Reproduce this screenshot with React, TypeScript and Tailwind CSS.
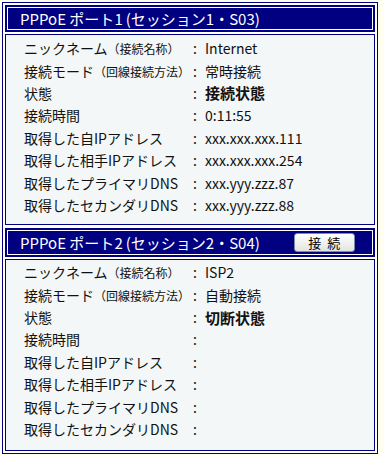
import React from "react";

const FONT = { fontFamily: '"Noto Sans CJK JP", "Noto Sans", sans-serif' };

type Row = { label: React.ReactNode; value: React.ReactNode };

function Label({ main, sub }: { main: string; sub?: string }) {
  return (
    <span>
      {main}
      {sub && <span className="text-[12px]">{sub}</span>}
    </span>
  );
}

function Body({ rows, className }: { rows: Row[]; className: string }) {
  return (
    <div className={`border border-[#000080] bg-[#f4f7f7] ${className}`}>
      {rows.map((r, i) => (
        <div key={i} className="flex h-[22.4px] items-center text-[14px] leading-none text-[#111]">
          <div className="w-[187px] pl-[18px] whitespace-nowrap">{r.label}</div>
          <div className="w-[12px]">:</div>
          <div className="whitespace-nowrap">{r.value}</div>
        </div>
      ))}
    </div>
  );
}

function Header({ port, session, button }: { port: string; session: string; button?: boolean }) {
  return (
    <div className="bg-[#000080] p-[2px]">
      <div className={`flex items-center border border-white pl-[12px] ${button ? "h-[25px]" : "h-[23px]"}`}>
        <span className="text-[15px] leading-none text-white whitespace-nowrap">
          PPPoE ポート{port}
          <span className="ml-[3px]">(</span>セッション{session}・S0{port === "1" ? "3" : "4"})
        </span>
        {button && (
          <button className="ml-[34px] flex h-[19px] w-[61px] items-center justify-center rounded-[3px] border border-[#7a8ca8] bg-gradient-to-b from-white to-[#e4e4e0] text-[13px] leading-none text-black tracking-[6px] pl-[6px]">
            接続
          </button>
        )}
      </div>
    </div>
  );
}

export default function App() {
  const rows1: Row[] = [
    { label: <Label main="ニックネーム" sub="（接続名称）" />, value: "Internet" },
    { label: <Label main="接続モード" sub="（回線接続方法）" />, value: "常時接続" },
    { label: "状態", value: <span className="font-bold text-[15px]">接続状態</span> },
    { label: "接続時間", value: "0:11:55" },
    { label: "取得した自IPアドレス", value: "xxx.xxx.xxx.111" },
    { label: "取得した相手IPアドレス", value: "xxx.xxx.xxx.254" },
    { label: "取得したプライマリDNS", value: "xxx.yyy.zzz.87" },
    { label: "取得したセカンダリDNS", value: "xxx.yyy.zzz.88" },
  ];
  const rows2: Row[] = [
    { label: <Label main="ニックネーム" sub="（接続名称）" />, value: "ISP2" },
    { label: <Label main="接続モード" sub="（回線接続方法）" />, value: "自動接続" },
    { label: "状態", value: <span className="font-bold text-[15px]">切断状態</span> },
    { label: "接続時間", value: "" },
    { label: "取得した自IPアドレス", value: "" },
    { label: "取得した相手IPアドレス", value: "" },
    { label: "取得したプライマリDNS", value: "" },
    { label: "取得したセカンダリDNS", value: "" },
  ];
  return (
    <div className="min-h-[455px] bg-[#fffff0] p-[2px]" style={FONT}>
      <div className="flex w-[376px] flex-col border border-[#000080] bg-white p-[2px]">
        <Header port="1" session="1" />
        <Body rows={rows1} className="mt-[2px] pt-[2px] pb-[8px]" />
        <div className="mt-[3px]">
          <Header port="2" session="2" button />
        </div>
        <Body rows={rows2} className="mt-[2px] pt-[1px] pb-[10px]" />
      </div>
    </div>
  );
}
